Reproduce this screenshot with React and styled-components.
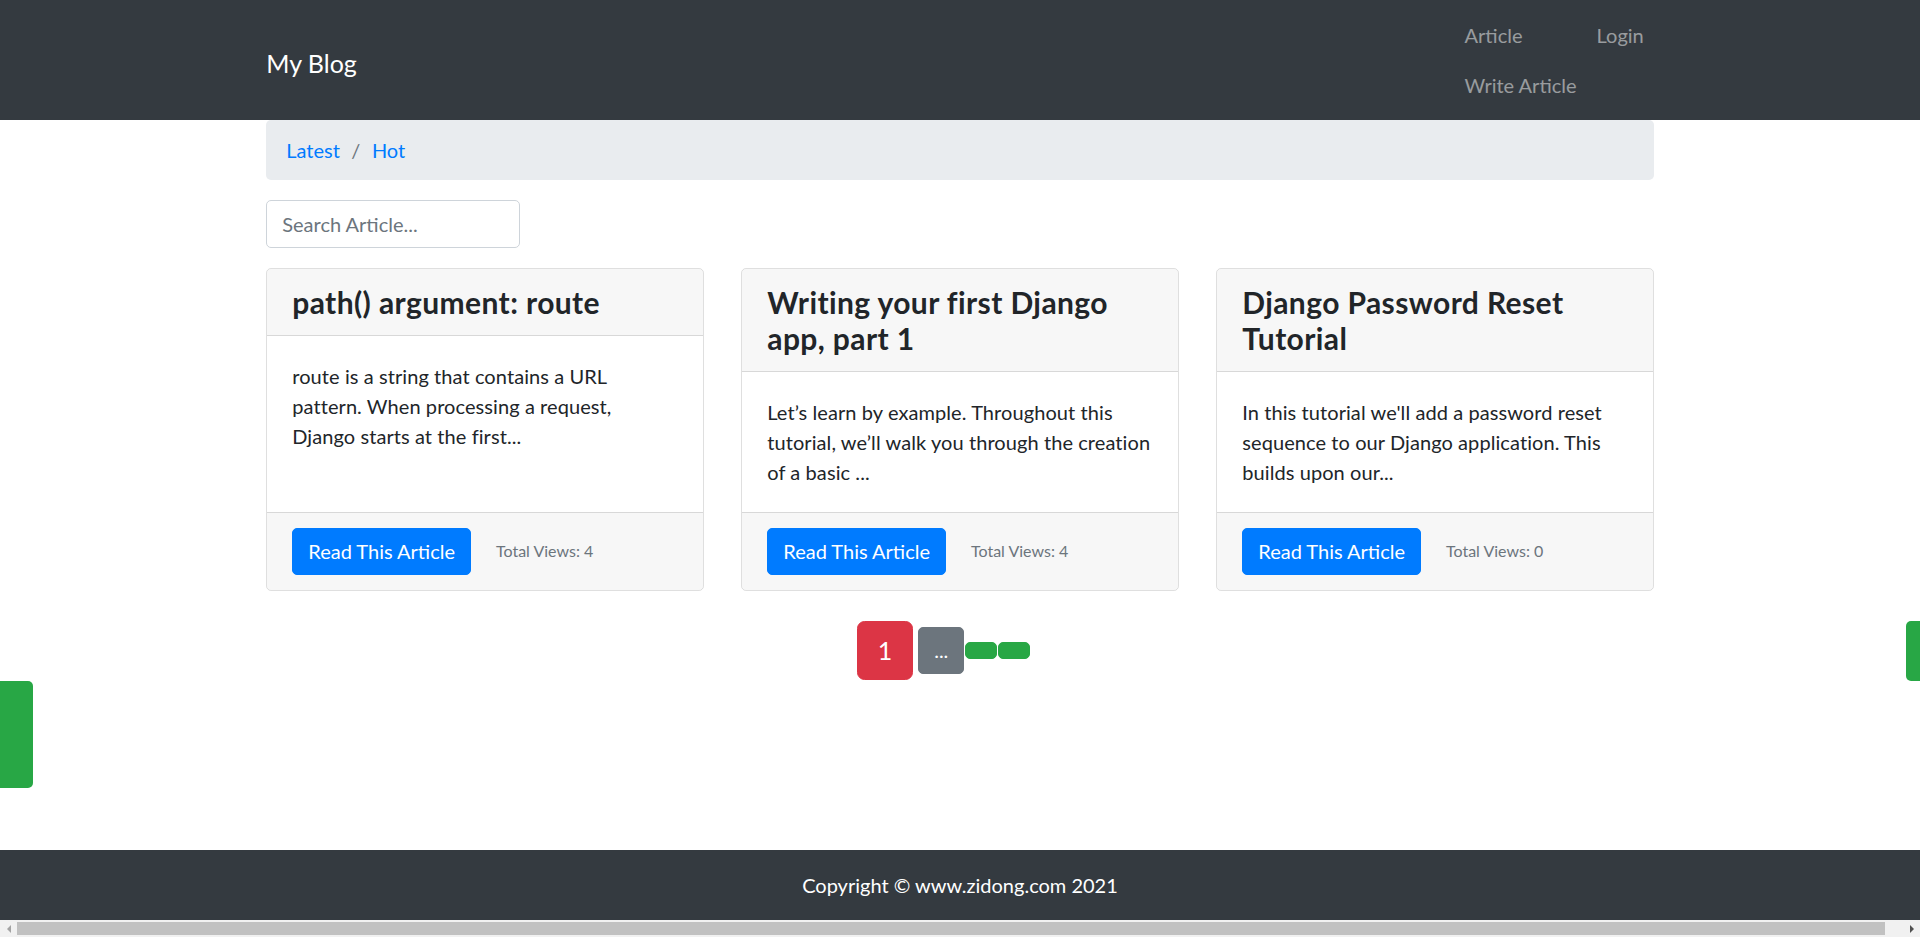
import styled, { createGlobalStyle } from "styled-components";

const articles = [
  {
    id: 1,
    title: "path() argument: route",
    body: "route is a string that contains a URL pattern. When processing a request, Django starts at the first...",
    views: 4,
  },
  {
    id: 2,
    title: "Writing your first Django app, part 1",
    body: "Let’s learn by example. Throughout this tutorial, we’ll walk you through the creation of a basic ...",
    views: 4,
  },
  {
    id: 3,
    title: "Django Password Reset Tutorial",
    body: "In this tutorial we'll add a password reset sequence to our Django application. This builds upon our...",
    views: 0,
  },
];

const GlobalStyle = createGlobalStyle`
  html, body, #root {
    height: 100%;
  }

  html, body {
    overflow: hidden;
  }

  body {
    margin: 0;
    font-family: Lato, "Open Sans", sans-serif;
    font-size: 20px;
    line-height: 30px;
    color: #212529;
    background: #fff;
  }

  * {
    box-sizing: border-box;
  }
`;

const Page = styled.div`
  height: 100%;
  display: flex;
  flex-direction: column;
`;

const Container = styled.div`
  width: 1387.5px;
  margin: 0 auto;
`;

const Navbar = styled.nav`
  background: #343a40;
  padding: 10px 0;
`;

const NavInner = styled(Container)`
  display: flex;
  justify-content: space-between;
  align-items: center;
`;

const Brand = styled.a`
  color: #fff;
  font-size: 25px;
  line-height: 37.5px;
  padding: 10px 0 2px;
  text-decoration: none;
`;

const NavList = styled.ul`
  display: grid;
  grid-template-columns: auto auto;
  margin: 0;
  padding: 0;
  list-style: none;
`;

const NavLink = styled.a`
  display: block;
  padding: 10px;
  color: rgba(255, 255, 255, 0.5);
  text-decoration: none;
`;

const Main = styled.main`
  flex: 1;
`;

const Breadcrumb = styled.ol`
  display: flex;
  margin: 0;
  padding: 15px 20px;
  list-style: none;
  background: #e9ecef;
  border-radius: 5px;

  li + li::before {
    content: "/";
    padding: 0 11.5px;
    color: #6c757d;
  }

  a {
    color: #007bff;
    text-decoration: none;
  }
`;

const Search = styled.input`
  display: block;
  width: 254px;
  height: 47.5px;
  margin-top: 20px;
  padding: 7.5px 15px;
  font: inherit;
  color: #495057;
  border: 1px solid #ced4da;
  border-radius: 5px;

  &::placeholder {
    color: #6c757d;
  }
`;

const CardRow = styled.div`
  display: grid;
  grid-template-columns: repeat(3, 1fr);
  gap: 37.5px;
  margin-top: 20px;
`;

const Card = styled.div`
  display: flex;
  flex-direction: column;
  border: 1px solid rgba(0, 0, 0, 0.125);
  border-radius: 5px;
  overflow: hidden;
`;

const CardHeader = styled.div`
  padding: 15px 25px;
  background: rgba(0, 0, 0, 0.03);
  border-bottom: 1px solid rgba(0, 0, 0, 0.125);

  h4 {
    margin: 0;
    font-size: 30px;
    line-height: 36px;
    font-weight: 700;
    letter-spacing: 0.4px;
  }
`;

const CardBody = styled.div`
  flex: 1;
  padding: 25px;

  p {
    margin: 0;
    letter-spacing: 0.08px;
  }
`;

const CardFooter = styled.div`
  display: flex;
  align-items: center;
  gap: 25px;
  padding: 15px 25px;
  background: rgba(0, 0, 0, 0.03);
  border-top: 1px solid rgba(0, 0, 0, 0.125);
`;

const Button = styled.button`
  font-family: inherit;
  font-size: ${(p) => (p.$lg ? "25px" : "20px")};
  line-height: ${(p) => (p.$lg ? "37.5px" : "30px")};
  padding: ${(p) => (p.$lg ? "10px 20px" : p.$empty ? "0" : "7.5px 15px")};
  min-height: 17.5px;
  min-width: 32px;
  color: #fff;
  background: ${(p) => p.$color};
  border: 1px solid ${(p) => p.$color};
  border-radius: ${(p) => (p.$lg ? "7.5px" : "5px")};
  cursor: pointer;
`;

const Views = styled.small`
  font-size: 16px;
  color: #6c757d;
`;

const Pager = styled.section`
  position: relative;
  margin-top: 30px;
  display: flex;
  justify-content: center;
  align-items: center;
  padding-right: 33px;
`;

const PagerButtons = styled.div`
  display: flex;
  align-items: center;

  button + button {
    margin-left: 1px;
  }

  button:first-child {
    margin-right: 4px;
  }
`;

const SideTab = styled.span`
  position: absolute;
  background: #28a745;
  border-radius: 5px;
  left: ${(p) => p.$left}px;
  top: ${(p) => p.$top}px;
  width: ${(p) => p.$w}px;
  height: ${(p) => p.$h}px;
`;

const Footer = styled.footer`
  background: #343a40;
  color: #fff;
  text-align: center;
  padding: 20px 0;
`;

const ScrollStrip = styled.div`
  display: flex;
  align-items: center;
  height: 17px;
  flex-shrink: 0;
  background: #f1f1f1;
`;

const ScrollArrow = styled.span`
  width: 17px;
  height: 17px;
  display: flex;
  align-items: center;
  justify-content: center;

  &::before {
    content: "";
    border-top: 4px solid transparent;
    border-bottom: 4px solid transparent;
    ${(p) =>
      p.$dir === "left"
        ? "border-right: 4px solid #a3a3a3;"
        : "border-left: 4px solid #505050;"}
  }
`;

const ScrollThumb = styled.span`
  flex: 1;
  height: 13px;
  margin-right: 18px;
  background: #c1c1c1;
`;

const App = () => {
  return (
    <Page>
      <GlobalStyle />
      <Navbar>
        <NavInner>
          <Brand href="#">My Blog</Brand>
          <NavList>
            <li><NavLink href="#">Article</NavLink></li>
            <li><NavLink href="#">Login</NavLink></li>
            <li><NavLink href="#">Write Article</NavLink></li>
          </NavList>
        </NavInner>
      </Navbar>

      <Main>
        <Container>
          <Breadcrumb>
            <li><a href="#">Latest</a></li>
            <li><a href="#">Hot</a></li>
          </Breadcrumb>
          <Search type="text" placeholder="Search Article..." />
          <CardRow>
            {articles.map((article) => (
              <Card key={article.id}>
                <CardHeader>
                  <h4>{article.title}</h4>
                </CardHeader>
                <CardBody>
                  <p>{article.body}</p>
                </CardBody>
                <CardFooter>
                  <Button $color="#007bff">Read This Article</Button>
                  <Views>Total Views: {article.views}</Views>
                </CardFooter>
              </Card>
            ))}
          </CardRow>
        </Container>

        <Pager>
          <PagerButtons>
            <Button $lg $color="#dc3545">1</Button>
            <Button $color="#6c757d">...</Button>
            <Button $empty $color="#28a745" />
            <Button $empty $color="#28a745" />
          </PagerButtons>
          <SideTab $left={-5} $top={60} $w={38} $h={107} />
          <SideTab $left={1906} $top={0} $w={37} $h={60} />
        </Pager>
      </Main>

      <Footer>Copyright © www.zidong.com 2021</Footer>
      <ScrollStrip>
        <ScrollArrow $dir="left" />
        <ScrollThumb />
        <ScrollArrow $dir="right" />
      </ScrollStrip>
    </Page>
  );
};

export default App;
